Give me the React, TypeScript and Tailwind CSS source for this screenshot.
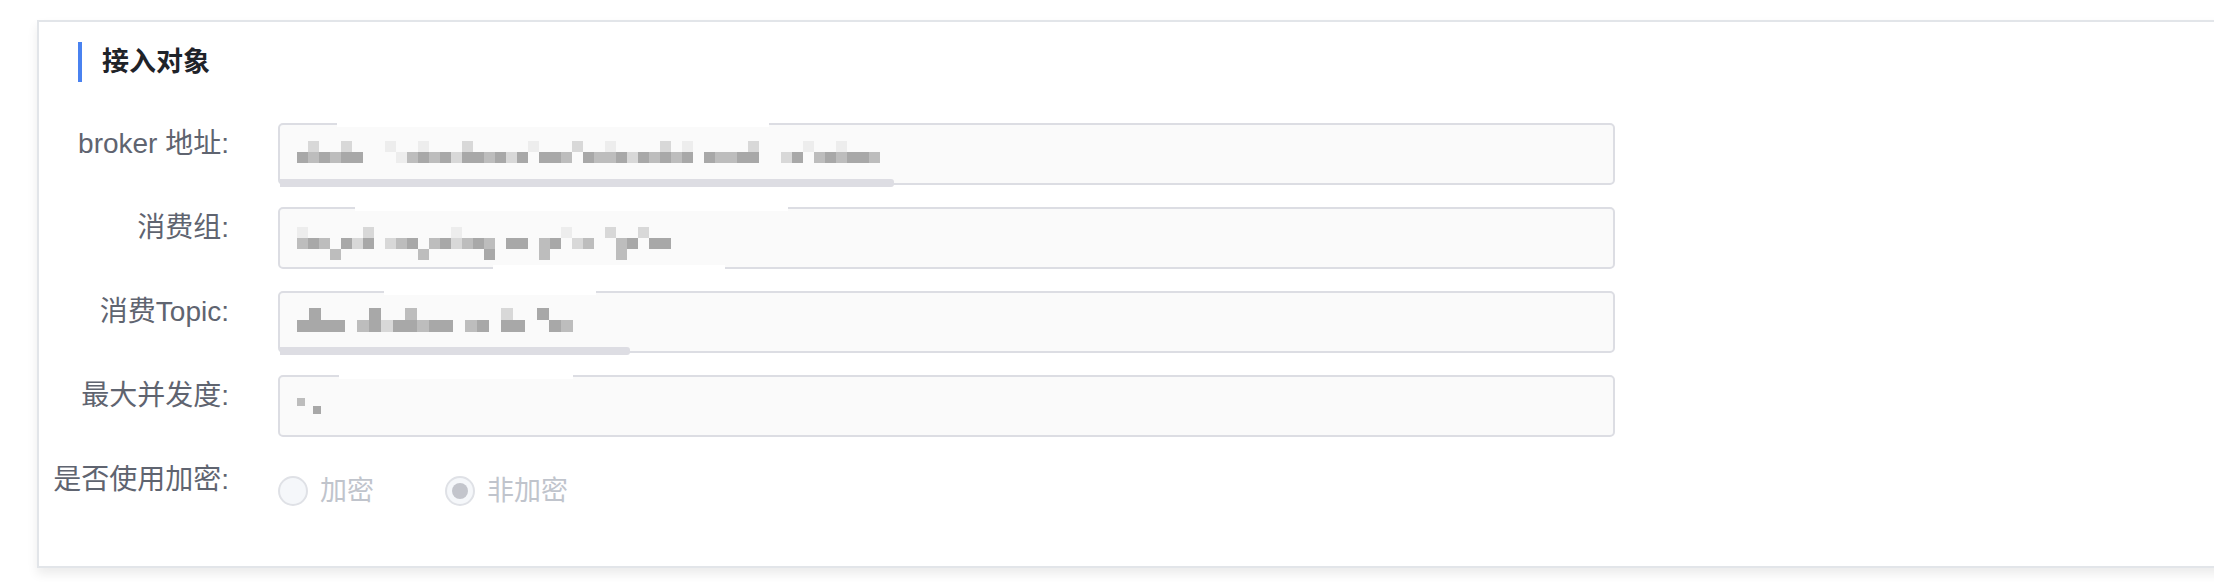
import React from 'react';

const SHADES: Record<string, string> = {
  a: '#ededed',
  b: '#d8d8d8',
  c: '#bdbdbd',
  d: '#a8a8a8',
};

// redacted values, drawn as pixel blocks
const Mosaic: React.FC<{ rows: string[]; cell: number }> = ({ rows, cell }) => {
  const cols = Math.max(...rows.map(r => r.length));
  return (
    <svg width={cols * cell} height={rows.length * cell} className="block">
      {rows.flatMap((r, y) =>
        r.split('').map((ch, x) =>
          SHADES[ch] ? (
            <rect key={`${x}-${y}`} x={x * cell} y={y * cell} width={cell} height={cell} fill={SHADES[ch]} />
          ) : null
        )
      )}
    </svg>
  );
};

interface Field {
  label: string;
  rows: string[];
  cell: number;
  top: string;
  patches: React.ReactNode;
}

const fields: Field[] = [
  {
    label: 'broker 地址:',
    rows: [
      '.b..b...a..a...b.....a...b..a....b.a.....b....a..a...',
      'dcdcdd...acdcdbddcdbd.ddc.dccdbdcdcd.dccdd..bd.cdcddc',
    ],
    cell: 11,
    top: 'pt-[16px]',
    patches: (
      <>
        <div className="absolute left-[57px] top-[-2px] h-[4px] w-[432px] bg-white" />
        <div className="absolute bottom-[-4px] left-0 h-[8px] w-[614px] rounded-r-[3px] bg-[#dddde3]" />
      </>
    ),
  },
  {
    label: '消费组:',
    rows: [
      'a.....b.......a.........a...b..b..',
      'cdc.dbd.bcd.cdbcdc.dd.cd.bc..cd.dd',
      '...c.......c.....d....c......c....',
    ],
    cell: 11,
    top: 'pt-[18px]',
    patches: (
      <>
        <div className="absolute left-[75px] top-[-2px] h-[4px] w-[433px] bg-white" />
        <div className="absolute bottom-[-2px] left-[213px] h-[4px] w-[232px] bg-white" />
      </>
    ),
  },
  {
    label: '消费Topic:',
    rows: ['.d....d..c.......b..d..', 'dddd.cdbddcdd.cd.dd..dc'],
    cell: 12,
    top: 'pt-[15px]',
    patches: (
      <>
        <div className="absolute left-[104px] top-[-2px] h-[4px] w-[212px] bg-white" />
        <div className="absolute bottom-[-4px] left-0 h-[8px] w-[350px] rounded-r-[3px] bg-[#dddde3]" />
      </>
    ),
  },
  {
    label: '最大并发度:',
    rows: ['c..', '..d'],
    cell: 8,
    top: 'pt-[21px]',
    patches: <div className="absolute left-[59px] top-[-2px] h-[4px] w-[234px] bg-white" />,
  },
];

const Radio: React.FC<{ label: string; checked?: boolean }> = ({ label, checked }) => (
  <div className="flex items-center">
    <span className="flex h-[30px] w-[30px] items-center justify-center rounded-full border-2 border-[#dfe1e6] bg-[#f5f7fa]">
      {checked && <span className="h-[16px] w-[16px] rounded-full bg-[#c3c5cc]" />}
    </span>
    <span className="ml-[12px] text-[27px] leading-none text-[#c0c4cc]">{label}</span>
  </div>
);

export default function App() {
  return (
    <div className="h-[582px] w-full overflow-hidden bg-white pl-[37px] pt-[20px] font-['Liberation_Sans','Noto_Sans_CJK_SC',sans-serif]">
      <div className="h-[548px] w-[2240px] border-2 border-[#e2e5e9] bg-white shadow-[0_6px_10px_rgba(0,0,0,0.08)]">
        <div className="ml-[39px] mt-[20px] flex h-[40px] items-center">
          <div className="h-[40px] w-[4px] bg-[#4a82f0]" />
          <h2 className="ml-[20px] text-[27px] font-bold text-[#1f2329]">接入对象</h2>
        </div>

        <div className="mt-[41px] flex flex-col gap-[22px]">
          {fields.map(f => (
            <div key={f.label} className="flex items-start">
              <label className="w-[190px] text-right text-[28px] leading-[42px] text-[#5f6470]">{f.label}</label>
              <div className={`relative ml-[49px] h-[62px] w-[1337px] rounded-[5px] border-2 border-[#dcdde3] bg-[#fafafa] pl-[17px] ${f.top}`}>
                {f.patches}
                <Mosaic rows={f.rows} cell={f.cell} />
              </div>
            </div>
          ))}

          <div className="flex items-start">
            <label className="w-[190px] text-right text-[28px] leading-[42px] text-[#5f6470]">是否使用加密:</label>
            <div className="ml-[49px] flex h-[64px] items-center gap-[71px]">
              <Radio label="加密" />
              <Radio label="非加密" checked />
            </div>
          </div>
        </div>
      </div>
    </div>
  );
}
